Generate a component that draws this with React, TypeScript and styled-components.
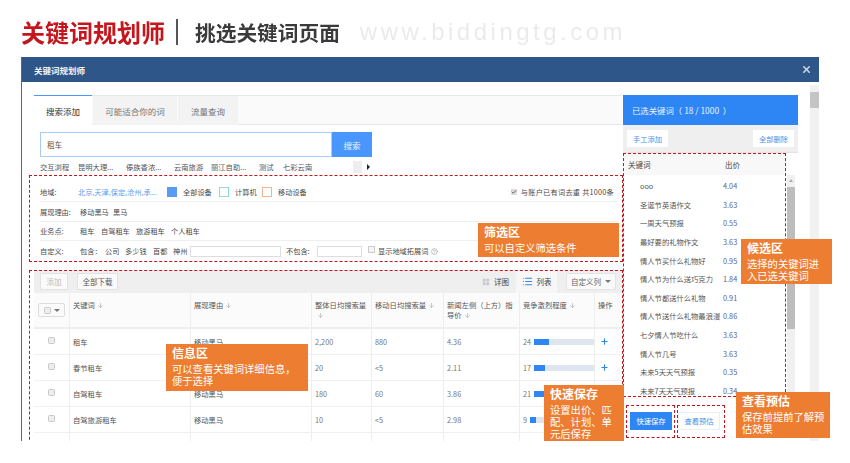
import React from "react";
import styled, { createGlobalStyle } from "styled-components";
import { ArrowDown, LayoutGrid, List, Plus, X, CircleHelp, Check } from "lucide-react";

const Global = createGlobalStyle`
  html, body { margin: 0; padding: 0; background: #fff; }
  body { font-family: "Noto Sans CJK SC", "Liberation Sans", sans-serif; color: #555; }
  * { box-sizing: border-box; }
`;

const Stage = styled.div`
  width: 850px;
  height: 441px;
  overflow: hidden;
  padding-left: 21px;
  filter: blur(0.3px);
`;
const PageHead = styled.header`
  height: 57px;
  display: flex;
  align-items: center;
  padding-top: 6px;
`;
const MainTitle = styled.h1`
  margin: 0;
  font-size: 24px;
  line-height: 30px;
  font-weight: 700;
  color: #c4161c;
`;
const HeadRule = styled.span`
  width: 2px;
  height: 26px;
  background: #555;
  margin: 0 17px 0 11px;
`;
const SubTitle = styled.h2`
  margin: 0;
  font-size: 20.7px;
  font-weight: 700;
  color: #3a3a3a;
`;
const Site = styled.span`
  margin-left: 20px;
  font-family: "Liberation Sans", sans-serif;
  font-size: 24px;
  letter-spacing: 3.5px;
  color: #ebebeb;
`;

const Modal = styled.section`
  position: relative;
  width: 798px;
  height: 400px;
  background: #fff;
  border-left: 1px solid #666;
`;
const ModalBar = styled.div`
  height: 25px;
  background: #2f5688;
  color: #f2f5f9;
  font-size: 8.5px;
  font-weight: 700;
  display: flex;
  align-items: center;
  justify-content: space-between;
  padding: 0 7px 0 12px;
`;
const ModalBody = styled.div`
  display: flex;
  justify-content: space-between;
`;
const Content = styled.div`
  display: flex;
  padding: 13px 0 0 12px;
`;
const OuterScroll = styled.div`
  width: 9px;
  height: 360px;
  margin-top: 3px;
  background: #f1f1f1;
  padding-top: 7px;
`;
const OuterThumb = styled.div`
  height: 16px;
  background: #c4c4c4;
`;

const LeftCol = styled.div`
  width: 588px;
`;
const Tabs = styled.div`
  display: flex;
  height: 30px;
  background: #fafafa;
  border-top: 1px solid #e8e8e8;
  border-bottom: 1px solid #e6e6e6;
`;
const Tab = styled.div<{ $active?: boolean; $w: number }>`
  width: ${(p) => p.$w}px;
  margin-top: ${(p) => (p.$active ? "-1px" : "0")};
  height: ${(p) => (p.$active ? "30px" : "29px")};
  margin-right: 1px;
  font-size: 8.5px;
  display: flex;
  align-items: center;
  justify-content: center;
  color: ${(p) => (p.$active ? "#333" : "#777")};
  background: ${(p) => (p.$active ? "#fff" : "#f3f3f3")};
  border-top: ${(p) => (p.$active ? "1px solid #4a96ff" : "none")};
`;
const SearchRow = styled.div`
  display: flex;
  height: 25px;
  margin: 7px 0 0 6px;
  width: 332px;
`;
const SearchInput = styled.div`
  flex: 1;
  border: 1px solid #a9c9ff;
  font-size: 7.5px;
  color: #555;
  display: flex;
  align-items: center;
  padding-left: 6px;
`;
const SearchButton = styled.button`
  width: 40px;
  border: 0;
  padding: 0;
  background: #4a96ff;
  color: #eaf3ff;
  font: inherit;
  font-size: 8.5px;
`;
const Suggest = styled.div`
  display: grid;
  grid-template-columns: 38px 48px 48px 37px 48px 24px 70px 9px 14px;
  height: 13px;
  margin: 3px 0 0 6px;
  align-items: center;
  font-size: 7.3px;
  color: #555;
`;
const PagerPrev = styled.span`
  width: 9px;
  height: 12px;
  background: #eee;
`;
const PagerNext = styled.span`
  width: 0;
  height: 0;
  margin-left: 5px;
  border-left: 3px solid #222;
  border-top: 3px solid transparent;
  border-bottom: 3px solid transparent;
`;

const Filters = styled.div`
  margin-top: 9px;
  width: 584px;
  padding-left: 6px;
`;
const FilterRow = styled.div<{ $h?: number; $last?: boolean }>`
  height: ${(p) => p.$h ?? 20}px;
  display: flex;
  align-items: center;
  font-size: 7.2px;
  color: #4a4a4a;
  border-bottom: ${(p) => (p.$last ? "none" : "1px solid #efefef")};
`;
const FilterLabel = styled.span`
  width: 40px;
`;
const Region = styled.span`
  width: 89px;
  color: #5b9bf0;
  white-space: nowrap;
  margin-left: -2px;
`;
const Device = styled.span<{ $color: string; $filled?: boolean; $w: number }>`
  width: ${(p) => p.$w}px;
  display: flex;
  align-items: center;
  gap: 6px;
  &::before {
    content: "";
    width: 8px;
    height: 8px;
    background: ${(p) => (p.$filled ? p.$color : "#fff")};
    border: 1px solid ${(p) => p.$color};
  }
`;
const Dedup = styled.span`
  margin-left: auto;
  display: flex;
  align-items: center;
  gap: 4px;
  margin-right: 4px;
`;
const TickBox = styled.span`
  width: 6px;
  height: 6px;
  background: #ddd;
  color: #444;
  display: inline-flex;
  align-items: center;
  justify-content: center;
`;
const DedupText = styled.span`
  letter-spacing: 0.25px;
`;
const Tag = styled.span<{ $w: number; $gap?: number }>`
  width: ${(p) => p.$w}px;
  margin-left: ${(p) => p.$gap ?? 0}px;
  white-space: nowrap;
`;
const FieldInput = styled.span<{ $w: number }>`
  width: ${(p) => p.$w}px;
  height: 11px;
  border: 1px solid #ddd;
  background: #fff;
`;
const EmptyBox = styled.span`
  width: 7px;
  height: 7px;
  border: 1px solid #ccc;
  background: #f4f4f4;
  margin: -3px 3px 0 6px;
`;
const HelpIcon = styled(CircleHelp)`
  color: #999;
  margin-left: 3px;
`;

const TablePanel = styled.div`
  margin-top: 9px;
`;
const Toolbar = styled.div`
  height: 23px;
  background: #efefef;
  display: flex;
  align-items: center;
  padding-left: 6px;
`;
const ToolButton = styled.button<{ $muted?: boolean; $w: number }>`
  width: ${(p) => p.$w}px;
  height: 17px;
  padding: 0;
  margin-right: 9px;
  background: #fafafa;
  border: 1px solid #e2e2e2;
  border-radius: 1px;
  font: inherit;
  font-size: 7.5px;
  color: ${(p) => (p.$muted ? "#bbb" : "#555")};
`;
const ViewTabs = styled.div`
  margin-left: auto;
  display: flex;
  height: 23px;
  align-items: center;
  font-size: 7.5px;
  color: #444;
`;
const ViewTab = styled.span<{ $active?: boolean; $w: number }>`
  width: ${(p) => p.$w}px;
  height: 23px;
  display: flex;
  align-items: center;
  justify-content: center;
  gap: 4px;
  background: ${(p) => (p.$active ? "#f7f7f7" : "transparent")};
`;
const ColumnMenu = styled.button`
  width: 50px;
  height: 17px;
  margin: 0 6px 0 9px;
  padding: 0;
  background: #fafafa;
  border: 1px solid #e4e4e4;
  border-radius: 2px;
  font: inherit;
  font-size: 7.5px;
  color: #666;
  display: flex;
  align-items: center;
  justify-content: center;
  gap: 4px;
`;
const Caret = styled.span`
  width: 0;
  height: 0;
  border-top: 3px solid #777;
  border-left: 3px solid transparent;
  border-right: 3px solid transparent;
`;
const GridRow = styled.div<{ $head?: boolean }>`
  display: grid;
  grid-template-columns: 35px 121px 121px 60px 72px 76px 75px 28px;
  height: ${(p) => (p.$head ? "36px" : "26px")};
  background: ${(p) => (p.$head ? "#fbfbfb" : "#fff")};
  border-bottom: ${(p) => (p.$head ? "2px solid #eee" : "1px solid #f0f0f0")};
  font-size: 7.3px;
  color: #555;
`;
const Cell = styled.div<{ $head?: boolean; $first?: boolean; $num?: boolean }>`
  display: ${(p) => (p.$head ? "block" : "flex")};
  align-items: center;
  padding: ${(p) => (p.$head ? "7px 3px 0" : "0 3px")};
  line-height: 10px;
  justify-content: ${(p) => (p.$first ? "center" : "flex-start")};
  border-left: ${(p) => (p.$first ? "none" : "1px solid #eee")};
  color: ${(p) => (p.$num ? "#777" : "inherit")};
`;
const SelectMenu = styled.span`
  display: inline-flex;
  align-items: center;
  justify-content: center;
  gap: 3px;
  width: 27px;
  height: 14px;
  margin: 3px 0 0 1px;
  border: 1px solid #ddd;
  border-radius: 2px;
  background: #fafafa;
`;
const RowCheck = styled.span<{ $lift?: number }>`
  width: 7px;
  height: 7px;
  border: 1px solid #c8c8c8;
  border-radius: 1.5px;
  background: #eee;
  margin-top: ${(p) => p.$lift ?? 0}px;
`;
const SortIcon = styled(ArrowDown)`
  color: #b4b4b4;
  vertical-align: -1px;
  margin-left: 2px;
`;
const Meter = styled.div`
  flex: 1;
  height: 6px;
  background: #dfe5ee;
  margin-left: 3px;
  margin-right: -3px;
`;
const MeterFill = styled.div`
  height: 100%;
  background: #2e86f5;
`;
const AddIcon = styled(Plus)`
  color: #2e86f5;
  margin-left: 2px;
`;

const RightCol = styled.aside`
  width: 175px;
  margin-left: 1px;
  background: #fff;
`;
const PanelHead = styled.div`
  height: 30px;
  background: #2e86f5;
  color: #eaf3ff;
  font-size: 8.4px;
  display: flex;
  align-items: center;
  padding-left: 9px;
  white-space: pre;
`;
const PanelTools = styled.div`
  height: 28px;
  background: #efefef;
  display: flex;
  justify-content: space-between;
  align-items: center;
  padding: 0 4px;
  border-bottom: 1px solid #e4e4e4;
`;
const LinkButton = styled.button`
  width: 41px;
  height: 17px;
  padding: 0;
  border: 0;
  background: #fff;
  font: inherit;
  font-size: 7.3px;
  color: #4a90e8;
`;
const PanelMain = styled.div`
  display: grid;
  grid-template-columns: 164px 8px;
`;
const ListHead = styled.div`
  height: 22px;
  background: #f8f8f8;
  display: grid;
  grid-template-columns: 97px 1fr;
  align-items: center;
  padding-left: 5px;
  font-size: 7.5px;
  color: #444;
`;
const KeywordList = styled.ul`
  list-style: none;
  margin: 0;
  padding: 2px 0 0 17px;
  height: 222px;
  overflow: hidden;
`;
const KeywordRow = styled.li`
  height: 18.6px;
  display: grid;
  grid-template-columns: 83px 1fr;
  align-items: center;
  font-size: 7.3px;
  color: #555;
  white-space: nowrap;
`;
const Price = styled.span`
  color: #5a648f;
`;
const ListScroll = styled.div`
  position: relative;
  margin-top: 22px;
  background: #f0f0f0;
  padding-top: 12px;
  height: 222px;
  &::before {
    content: "";
    position: absolute;
    top: 4px;
    left: 2px;
    border-bottom: 3px solid #aaa;
    border-left: 2px solid transparent;
    border-right: 2px solid transparent;
  }
`;
const ListThumb = styled.div`
  height: 142px;
  background: #bdbdbd;
`;
const PanelFooter = styled.div`
  display: flex;
  gap: 6px;
  padding: 15px 0 0 7px;
  background: #fff;
`;
const SaveButton = styled.button<{ $primary?: boolean }>`
  width: 42px;
  height: 18px;
  padding: 0;
  border: ${(p) => (p.$primary ? "0" : "1px solid #eee")};
  background: ${(p) => (p.$primary ? "#2e86f5" : "#fff")};
  color: ${(p) => (p.$primary ? "#fff" : "#4a90e8")};
  font: inherit;
  font-size: 7.3px;
`;

const Zone = styled.div<{ $x: number; $y: number; $w: number; $h: number }>`
  position: absolute;
  left: ${(p) => p.$x}px;
  top: ${(p) => p.$y}px;
  width: ${(p) => p.$w}px;
  height: ${(p) => p.$h}px;
  border: 1px dashed #c4161c;
  pointer-events: none;
`;
const Callout = styled.div<{ $x: number; $y: number; $w: number; $h: number }>`
  position: absolute;
  left: ${(p) => p.$x}px;
  top: ${(p) => p.$y}px;
  width: ${(p) => p.$w}px;
  height: ${(p) => p.$h}px;
  background: #ed7d31;
  color: #fff;
  padding: 2px 5px 0 6px;
  font-size: 10.3px;
  line-height: 12px;
`;
const CalloutTitle = styled.div`
  font-size: 12px;
  line-height: 14px;
  margin-bottom: 3px;
  font-weight: 700;
`;

const suggestions = ["交互浏程", "昆明大理...", "傣族香浓...", "云南旅游", "丽江自助...", "测试", "七彩云南"];
const rows = [
  { k: "租车", a: "2,200", b: "880", c: "4.36", d: 24, w: 25, add: true },
  { k: "春节租车", a: "20", b: "<5", c: "2.11", d: 17, w: 18, add: true },
  { k: "自驾租车", a: "180", b: "60", c: "3.86", d: 21, w: 22, add: true },
  { k: "自驾旅游租车", a: "10", b: "<5", c: "2.98", d: 9, w: 9, add: false },
  { k: "", a: "", b: "", c: "", d: 0, w: 0, add: false },
];
const keywords: [string, string][] = [
  ["ooo", "4.04"],
  ["圣诞节英语作文", "3.63"],
  ["一周天气预报", "0.55"],
  ["最好要的礼物作文", "3.63"],
  ["情人节买什么礼物好", "0.95"],
  ["情人节为什么送巧克力", "1.84"],
  ["情人节都送什么礼物", "0.91"],
  ["情人节送什么礼物最浪漫", "0.86"],
  ["七夕情人节吃什么", "3.63"],
  ["情人节几号", "3.63"],
  ["未来5天天气预报", "0.35"],
  ["未来7天天气预报", "0.34"],
];

const Sort = () => <SortIcon size={7} strokeWidth={2.5} />;

export default function App() {
  return (
    <>
      <Global />
      <Stage>
        <PageHead>
          <MainTitle>关键词规划师</MainTitle>
          <HeadRule />
          <SubTitle>挑选关键词页面</SubTitle>
          <Site>www.biddingtg.com</Site>
        </PageHead>
        <Modal>
          <ModalBar>
            关键词规划师
            <X size={11} strokeWidth={3.5} color="#c9d3e0" />
          </ModalBar>
          <ModalBody>
            <Content>
              <LeftCol>
                <Tabs>
                  <Tab $active $w={58}>搜索添加</Tab>
                  <Tab $w={84}>可能适合你的词</Tab>
                  <Tab $w={60}>流量查询</Tab>
                </Tabs>
                <SearchRow>
                  <SearchInput>租车</SearchInput>
                  <SearchButton>搜索</SearchButton>
                </SearchRow>
                <Suggest>
                  {suggestions.map((s) => (
                    <span key={s}>{s}</span>
                  ))}
                  <PagerPrev />
                  <PagerNext />
                </Suggest>
                <Filters>
                  <FilterRow>
                    <FilterLabel>地域:</FilterLabel>
                    <Region>北京,天津,保定,沧州,承...</Region>
                    <Device $color="#5a9bf5" $filled $w={52}>全部设备</Device>
                    <Device $color="#8fdccb" $w={43}>计算机</Device>
                    <Device $color="#f2b48a" $w={50}>移动设备</Device>
                    <Dedup>
                      <TickBox><Check size={6} strokeWidth={3} /></TickBox>
                      <DedupText>与账户已有词去重 共1000条</DedupText>
                    </Dedup>
                  </FilterRow>
                  <FilterRow>
                    <FilterLabel>展现理由:</FilterLabel>
                    <Tag $w={33}>移动黑马</Tag>
                    <Tag $w={20}>黑马</Tag>
                  </FilterRow>
                  <FilterRow $h={19}>
                    <FilterLabel>业务点:</FilterLabel>
                    <Tag $w={21}>租车</Tag>
                    <Tag $w={35}>自驾租车</Tag>
                    <Tag $w={35}>旅游租车</Tag>
                    <Tag $w={32}>个人租车</Tag>
                  </FilterRow>
                  <FilterRow $last>
                    <FilterLabel>自定义:</FilterLabel>
                    <Tag $w={25}>包含：</Tag>
                    <Tag $w={20}>公司</Tag>
                    <Tag $w={28}>多少钱</Tag>
                    <Tag $w={20}>首都</Tag>
                    <Tag $w={17}>神州</Tag>
                    <FieldInput $w={91} />
                    <Tag $w={31} $gap={5}>不包含:</Tag>
                    <FieldInput $w={45} />
                    <EmptyBox />
                    显示地域拓展词
                    <HelpIcon size={7} />
                  </FilterRow>
                </Filters>
                <TablePanel>
                  <Toolbar>
                    <ToolButton $muted $w={28}>添加</ToolButton>
                    <ToolButton $w={41}>全部下载</ToolButton>
                    <ViewTabs>
                      <ViewTab $w={41}>
                        <LayoutGrid size={8} color="#ccc" fill="#ccc" />
                        详图
                      </ViewTab>
                      <ViewTab $active $w={41}>
                        <List size={11} color="#2e86f5" strokeWidth={2.5} />
                        列表
                      </ViewTab>
                      <ColumnMenu>自定义列<Caret /></ColumnMenu>
                    </ViewTabs>
                  </Toolbar>
                  <GridRow $head>
                    <Cell $head $first>
                      <SelectMenu><RowCheck /><Caret /></SelectMenu>
                    </Cell>
                    <Cell $head>关键词<Sort /></Cell>
                    <Cell $head>展现理由<Sort /></Cell>
                    <Cell $head>整体日均搜索量<Sort /></Cell>
                    <Cell $head>移动日均搜索量<Sort /></Cell>
                    <Cell $head>新闻左侧（上方）指导价<Sort /></Cell>
                    <Cell $head>竞争激烈程度<Sort /></Cell>
                    <Cell $head>操作</Cell>
                  </GridRow>
                  {rows.map((r, i) => (
                    <GridRow key={i}>
                      <Cell $first>{r.k && <RowCheck $lift={-2} />}</Cell>
                      <Cell>{r.k}</Cell>
                      <Cell>{r.k && "移动黑马"}</Cell>
                      <Cell $num>{r.a}</Cell>
                      <Cell $num>{r.b}</Cell>
                      <Cell $num>{r.c}</Cell>
                      <Cell $num>
                        {r.k && (
                          <>
                            {r.d}
                            <Meter>
                              <MeterFill style={{ width: `${r.w}%` }} />
                            </Meter>
                          </>
                        )}
                      </Cell>
                      <Cell>{r.add && <AddIcon size={9} strokeWidth={3} />}</Cell>
                    </GridRow>
                  ))}
                </TablePanel>
              </LeftCol>
              <RightCol>
                <PanelHead>已选关键词（ 18 / 1000  ）</PanelHead>
                <PanelTools>
                  <LinkButton>手工添加</LinkButton>
                  <LinkButton>全部删除</LinkButton>
                </PanelTools>
                <PanelMain>
                  <div>
                    <ListHead>
                      <span>关键词</span>
                      <span>出价</span>
                    </ListHead>
                    <KeywordList>
                      {keywords.map(([k, p]) => (
                        <KeywordRow key={k}>
                          <span>{k}</span>
                          <Price>{p}</Price>
                        </KeywordRow>
                      ))}
                    </KeywordList>
                  </div>
                  <ListScroll><ListThumb /></ListScroll>
                </PanelMain>
                <PanelFooter>
                  <SaveButton $primary>快速保存</SaveButton>
                  <SaveButton>查看预估</SaveButton>
                </PanelFooter>
              </RightCol>
            </Content>
            <OuterScroll><OuterThumb /></OuterScroll>
          </ModalBody>

          <Zone $x={7} $y={118} $w={594} $h={87} />
          <Zone $x={7} $y={213} $w={594} $h={190} />
          <Zone $x={601} $y={96} $w={163} $h={244} />
          <Zone $x={604} $y={348} $w={49} $h={33} />
          <Zone $x={655} $y={348} $w={48} $h={33} />

          <Callout $x={456} $y={166} $w={141} $h={34}>
            <CalloutTitle>筛选区</CalloutTitle>
            可以自定义筛选条件
          </Callout>
          <Callout $x={719} $y={182} $w={91} $h={45}>
            <CalloutTitle>候选区</CalloutTitle>
            选择的关键词进<br />入已选关键词
          </Callout>
          <Callout $x={144} $y={287} $w={142} $h={47}>
            <CalloutTitle>信息区</CalloutTitle>
            可以查看关键词详细信息，便于选择
          </Callout>
          <Callout $x={522} $y={328} $w={80} $h={60}>
            <CalloutTitle>快速保存</CalloutTitle>
            设置出价、匹配、计划、单元后保存
          </Callout>
          <Callout $x={714} $y={335} $w={94} $h={46}>
            <CalloutTitle>查看预估</CalloutTitle>
            保存前提前了解预估效果
          </Callout>
        </Modal>
      </Stage>
    </>
  );
}
